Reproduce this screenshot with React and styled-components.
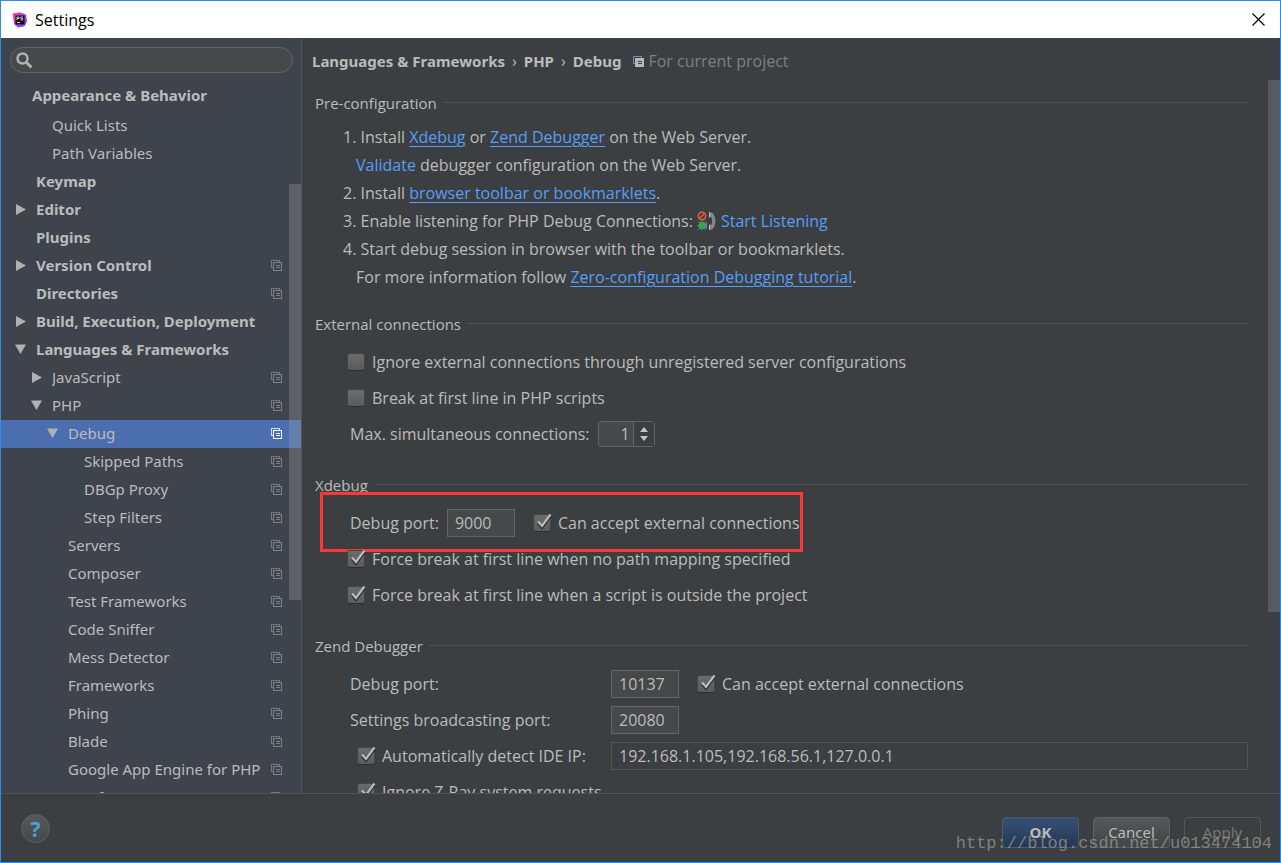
import React, { useState } from "react";
import styled, { createGlobalStyle, css } from "styled-components";

const TREE = [
  { label: "Quick Lists", depth: 1 },
  { label: "Path Variables", depth: 1 },
  { label: "Keymap", depth: 0 },
  { label: "Editor", depth: 0, arrow: "closed" },
  { label: "Plugins", depth: 0 },
  { label: "Version Control", depth: 0, arrow: "closed", project: true },
  { label: "Directories", depth: 0, project: true },
  { label: "Build, Execution, Deployment", depth: 0, arrow: "closed" },
  { label: "Languages & Frameworks", depth: 0, arrow: "open" },
  { label: "JavaScript", depth: 1, arrow: "closed", project: true },
  { label: "PHP", depth: 1, arrow: "open", project: true },
  { label: "Debug", depth: 2, arrow: "open", project: true },
  { label: "Skipped Paths", depth: 3, project: true },
  { label: "DBGp Proxy", depth: 3, project: true },
  { label: "Step Filters", depth: 3, project: true },
  { label: "Servers", depth: 2, project: true },
  { label: "Composer", depth: 2, project: true },
  { label: "Test Frameworks", depth: 2, project: true },
  { label: "Code Sniffer", depth: 2, project: true },
  { label: "Mess Detector", depth: 2, project: true },
  { label: "Frameworks", depth: 2, project: true },
  { label: "Phing", depth: 2, project: true },
  { label: "Blade", depth: 2, project: true },
  { label: "Google App Engine for PHP", depth: 2, project: true },
  { label: "Symfony", depth: 2, project: true },
];

const ProjectIcon = ({ back = "#6d7b86", front = "#7c7f83", fill = "none" }) => (
  <svg width="11" height="11" viewBox="0 0 11 11" shapeRendering="crispEdges" fill="none">
    <path d="M8.5 2V.5H.5V7.5H2" stroke={back} />
    <rect x="2.5" y="2.5" width="8" height="8" fill={fill} stroke={front} />
    <path d="M5 5.5H9M5 7.5H9" stroke={fill === "none" ? front : "#3c3f41"} />
  </svg>
);

const Arrow = ({ type }) => (
  <svg width="12" height="12" viewBox="0 0 12 12" fill="#afb1b3">
    {type === "open" && <path d="M0 1.5H11L5.5 11Z" />}
    {type === "closed" && <path d="M1 1L11 6.5L1 12Z" />}
  </svg>
);

const AppLogo = () => (
  <svg width="16" height="16" viewBox="0 0 16 16">
    <path d="M1 2L8 0.5L14 2.5L15 9L12.5 14L6 15.5L2 12Z" fill="#a043e8" />
    <path d="M0.5 1.5L8 0.5L7 4L2 9Z" fill="#f23f8f" />
    <path d="M10 12L15 9L12.5 14L6 15.5Z" fill="#7a4be0" />
    <rect x="3.5" y="3.5" width="9" height="9" fill="#120a18" />
    <path
      d="M5 8V5H7V6.5H5M11 5H8.8V6.3H10.7V8H8.5M5 10.5H8"
      stroke="#c8c8c8"
      fill="none"
    />
  </svg>
);

const ListenIcon = () => (
  <svg width="20" height="20" viewBox="0 0 20 20" fill="none">
    <path
      d="M1 10L3 12M0 14.5H3M1 19L3 17M5 9V12M5 19.5V16M9 10L7 12M9 19L7 17"
      stroke="#4f8f5d"
    />
    <ellipse cx="5" cy="14.5" rx="3.5" ry="3.8" fill="#2fa84f" />
    <path d="M10 12A3 3 0 0 0 10 17" stroke="#8d8f91" strokeWidth="1.5" />
    <circle cx="5" cy="5" r="3.7" fill="#4a3736" stroke="#e0604f" strokeWidth="1.5" />
    <path d="M2.5 7.5L7.5 2.5" stroke="#e0604f" strokeWidth="1.5" />
    <path
      d="M12 1.5H15C19.5 4.5 19.5 15.5 15 18.5H12V14H14C15.5 12 15.5 8 14 6H12Z"
      fill="#85878a"
    />
    <path d="M12.5 1V6.5M12.5 13.5V19" stroke="#b9bbbd" />
  </svg>
);

const CheckBox = ({ id, label, defaultChecked = false }) => {
  const [checked, setChecked] = useState(defaultChecked);
  return (
    <CheckLabel htmlFor={id}>
      <CheckHolder>
        <CheckInput
          id={id}
          type="checkbox"
          checked={checked}
          onChange={(e) => setChecked(e.target.checked)}
        />
        {checked && (
          <CheckMark viewBox="0 0 18 18" fill="none">
            <path d="M4 10L8 14.5L16.5 3" stroke="#222425" strokeWidth="2.5" />
            <path d="M4 8.5L8 13L16.5 1.5" stroke="#b9bbbd" strokeWidth="2.2" />
          </CheckMark>
        )}
      </CheckHolder>
      {label}
    </CheckLabel>
  );
};

const App = () => {
  const [selected, setSelected] = useState("Debug");

  return (
    <>
      <GlobalStyle />
      <Window>
        <TitleBar>
          <AppLogo />
          <Title>Settings</Title>
          <CloseButton aria-label="Close">
            <svg width="13" height="13" viewBox="0 0 13 13" stroke="#000" fill="none">
              <path d="M0.5 0.5L12.5 12.5M12.5 0.5L0.5 12.5" strokeWidth="1.2" />
            </svg>
          </CloseButton>
        </TitleBar>

        <Body>
          <Sidebar>
            <SearchBox>
              <svg width="17" height="17" viewBox="0 0 17 17" fill="none" stroke="#afb1b3">
                <circle cx="6.5" cy="6.5" r="5" strokeWidth="2.5" />
                <path d="M10 10L15.5 15.5" strokeWidth="3" />
              </svg>
              <SearchInput type="search" aria-label="Search settings" />
            </SearchBox>
            <Tree>
              <GroupHeader>Appearance &amp; Behavior</GroupHeader>
              {TREE.map((item) => {
                const active = item.label === selected;
                return (
                  <li key={item.label}>
                    <TreeRow
                      $depth={item.depth}
                      $active={active}
                      onClick={() => setSelected(item.label)}
                    >
                      <Arrow type={item.arrow} />
                      <TreeLabel>{item.label}</TreeLabel>
                      {item.project && (
                        <ProjectIcon
                          back={active ? "#cfe3f5" : undefined}
                          front={active ? "#ffffff" : undefined}
                        />
                      )}
                    </TreeRow>
                  </li>
                );
              })}
            </Tree>
            <TreeThumb />
          </Sidebar>

          <Main>
            <Breadcrumb>
              <Crumb>Languages &amp; Frameworks</Crumb>
              <Separator>›</Separator>
              <Crumb>PHP</Crumb>
              <Separator>›</Separator>
              <Crumb>Debug</Crumb>
              <ProjectIcon back="#5f96b5" front="#b4b6b8" fill="#b4b6b8" />
              <Scope>For current project</Scope>
            </Breadcrumb>

            <Scroller>
              <Section>
                <Heading>Pre-configuration</Heading>
                <Steps>
                  <Step>
                    1. Install <Link href="#xdebug">Xdebug</Link> or{" "}
                    <Link href="#zend">Zend Debugger</Link> on the Web Server.
                  </Step>
                  <Step $nested>
                    <PlainLink href="#validate">Validate</PlainLink> debugger configuration on the
                    Web Server.
                  </Step>
                  <Step>
                    2. Install <Link href="#toolbar">browser toolbar or bookmarklets</Link>.
                  </Step>
                  <Step>
                    3. Enable listening for PHP Debug Connections:
                    <ListenLink href="#listen">
                      <ListenIcon />
                      Start Listening
                    </ListenLink>
                  </Step>
                  <Step>4. Start debug session in browser with the toolbar or bookmarklets.</Step>
                  <Step $nested>
                    For more information follow{" "}
                    <Link href="#tutorial">Zero-configuration Debugging tutorial</Link>.
                  </Step>
                </Steps>
              </Section>

              <Section>
                <Heading>External connections</Heading>
                <Fields>
                  <Row>
                    <CheckBox
                      id="ignore-external"
                      label="Ignore external connections through unregistered server configurations"
                    />
                  </Row>
                  <Row>
                    <CheckBox id="break-first" label="Break at first line in PHP scripts" />
                  </Row>
                  <Row>
                    <FieldLabel htmlFor="max-connections">Max. simultaneous connections:</FieldLabel>
                    <Spinner>
                      <SpinnerInput id="max-connections" defaultValue="1" />
                      <SpinnerArrows>
                        <svg width="8" height="14" viewBox="0 0 8 14" fill="#c4c6c8">
                          <path d="M4 0L8 5H0ZM4 14L8 9H0Z" />
                        </svg>
                      </SpinnerArrows>
                    </Spinner>
                  </Row>
                </Fields>
              </Section>

              <Section>
                <Heading>Xdebug</Heading>
                <Fields>
                  <MarkedRow>
                    <FieldLabel htmlFor="xdebug-port">Debug port:</FieldLabel>
                    <PortInput id="xdebug-port" defaultValue="9000" />
                    <CheckBox
                      id="xdebug-external"
                      label="Can accept external connections"
                      defaultChecked
                    />
                    <Marker />
                  </MarkedRow>
                  <Row>
                    <CheckBox
                      id="force-mapping"
                      label="Force break at first line when no path mapping specified"
                      defaultChecked
                    />
                  </Row>
                  <Row>
                    <CheckBox
                      id="force-outside"
                      label="Force break at first line when a script is outside the project"
                      defaultChecked
                    />
                  </Row>
                </Fields>
              </Section>

              <Section>
                <Heading>Zend Debugger</Heading>
                <Fields>
                  <GridRow>
                    <FieldLabel htmlFor="zend-port">Debug port:</FieldLabel>
                    <Inline>
                      <PortInput id="zend-port" defaultValue="10137" />
                      <CheckBox
                        id="zend-external"
                        label="Can accept external connections"
                        defaultChecked
                      />
                    </Inline>
                  </GridRow>
                  <GridRow>
                    <FieldLabel htmlFor="broadcast-port">Settings broadcasting port:</FieldLabel>
                    <PortInput id="broadcast-port" defaultValue="20080" />
                  </GridRow>
                  <GridRow>
                    <Indent>
                      <CheckBox id="detect-ip" label="Automatically detect IDE IP:" defaultChecked />
                    </Indent>
                    <IpInput
                      aria-label="IDE IP"
                      readOnly
                      value="192.168.1.105,192.168.56.1,127.0.0.1"
                    />
                  </GridRow>
                  <Row>
                    <Indent>
                      <CheckBox id="ignore-zray" label="Ignore Z-Ray system requests" defaultChecked />
                    </Indent>
                  </Row>
                </Fields>
              </Section>
            </Scroller>
            <MainThumb />
          </Main>
        </Body>

        <Footer>
          <HelpButton aria-label="Help">?</HelpButton>
          <Actions>
            <Button $primary>OK</Button>
            <Button>Cancel</Button>
            <Button disabled>Apply</Button>
          </Actions>
          <Watermark>http://blog.csdn.net/u013474104</Watermark>
        </Footer>
      </Window>
    </>
  );
};

const GlobalStyle = createGlobalStyle`
  * {
    box-sizing: border-box;
  }

  body {
    margin: 0;
    background: #3c3f41;
  }

  body, button, input {
    font-family: "Open Sans", "Noto Sans", sans-serif;
    font-size: 16px;
    color: #bbbbbb;
  }

  svg {
    flex: none;
  }
`;

const compactFont = css`
  font-family: "Noto Sans", "Open Sans", sans-serif;
  font-size: 15px;
`;

const Window = styled.div`
  display: flex;
  flex-direction: column;
  height: 100vh;
  border: 1px solid #2d8cf0;
  background: #3c3f41;
`;

const TitleBar = styled.header`
  display: flex;
  flex: none;
  align-items: center;
  gap: 7px;
  height: 37px;
  padding: 0 15px 0 11px;
  background: #ffffff;
`;

const Title = styled.span`
  flex: 1;
  color: #000000;
`;

const CloseButton = styled.button`
  display: flex;
  padding: 0;
  border: none;
  background: none;
`;

const Body = styled.div`
  display: flex;
  flex: 1;
  min-height: 0;
`;

const Sidebar = styled.nav`
  position: relative;
  display: flex;
  flex: none;
  flex-direction: column;
  width: 301px;
  padding-top: 9px;
  border-right: 1px solid #515456;
  background: #3e434c;
  overflow: hidden;
`;

const SearchBox = styled.div`
  display: flex;
  flex: none;
  align-items: center;
  height: 26px;
  margin: 0 8px 0 9px;
  padding: 0 5px;
  border: 1px solid #646464;
  border-radius: 13px;
  background: #45494a;
`;

const SearchInput = styled.input`
  flex: 1;
  min-width: 0;
  border: none;
  outline: none;
  background: none;
`;

const Tree = styled.ul`
  margin: 7px 0 0;
  padding: 0;
  list-style: none;
`;

const GroupHeader = styled.li`
  ${compactFont}
  height: 32px;
  padding-left: 31px;
  font-weight: 700;
  line-height: 30px;
`;

const TreeRow = styled.button`
  ${compactFont}
  display: flex;
  align-items: center;
  gap: 9px;
  width: 100%;
  height: 28px;
  padding: 0 19px 2px ${({ $depth }) => 14 + $depth * 16}px;
  border: none;
  background: ${({ $active }) => ($active ? "#4b6eaf" : "none")};
  font-weight: ${({ $depth }) => ($depth === 0 ? 700 : 400)};
  text-align: left;
`;

const TreeLabel = styled.span`
  flex: 1;
  min-width: 0;
  margin-right: -4px;
  overflow: hidden;
  white-space: nowrap;
`;

const TreeThumb = styled.div`
  position: absolute;
  top: 146px;
  right: 0;
  width: 12px;
  height: 416px;
  background: rgba(166, 166, 166, 0.3);
`;

const Main = styled.main`
  position: relative;
  display: flex;
  flex: 1;
  flex-direction: column;
  min-width: 0;
`;

const Breadcrumb = styled.div`
  display: flex;
  flex: none;
  align-items: center;
  height: 42px;
  padding: 4px 0 0 10px;

  & > svg {
    margin: 0 4px 0 12px;
  }
`;

const Crumb = styled.b`
  ${compactFont}
`;

const Separator = styled.span`
  margin: 0 7px;
`;

const Scope = styled.span`
  color: #7d7f80;
`;

const Scroller = styled.div`
  flex: 1;
  min-height: 0;
  padding: 9px 32px 0 13px;
  overflow: hidden;
`;

const MainThumb = styled.div`
  position: absolute;
  top: 42px;
  right: 0;
  width: 12px;
  height: 532px;
  background: #595b5d;
`;

const Section = styled.section`
  margin-bottom: 19px;
`;

const Heading = styled.h2`
  display: flex;
  align-items: center;
  gap: 6px;
  height: 28px;
  margin: 0 0 6px;
  padding-bottom: 1px;
  font-size: 15px;
  font-weight: 400;

  &::after {
    content: "";
    flex: 1;
    height: 1px;
    background: #515151;
  }
`;

const Steps = styled.div`
  padding-left: 28px;
`;

const Step = styled.div`
  display: flex;
  align-items: center;
  height: 28px;
  padding-left: ${({ $nested }) => ($nested ? 13 : 0)}px;
  white-space: pre;
`;

const PlainLink = styled.a`
  color: #589df6;
  text-decoration: none;
`;

const Link = styled(PlainLink)`
  text-decoration: underline;
  text-underline-offset: 3px;
`;

const ListenLink = styled(PlainLink)`
  display: flex;
  align-items: center;
  gap: 4px;
  margin-left: 4px;
`;

const Fields = styled.div`
  padding-left: 33px;
`;

const Row = styled.div`
  display: flex;
  align-items: center;
  height: 36px;
`;

const GridRow = styled(Row)`
  display: grid;
  grid-template-columns: 263px 1fr;
`;

const MarkedRow = styled(Row)`
  position: relative;
  width: max-content;
`;

const Marker = styled.div`
  position: absolute;
  inset: -13px -3px -11px -28px;
  border: 3px solid #f93838;
  pointer-events: none;
`;

const Inline = styled.div`
  display: flex;
  align-items: center;
`;

const Indent = styled.div`
  padding-left: 10px;
`;

const FieldLabel = styled.label`
  padding: 0 8px 0 2px;
`;

const fieldStyle = css`
  height: 28px;
  padding: 0 7px;
  border: 1px solid #646464;
  outline: none;
  background: #45494a;
`;

const PortInput = styled.input`
  ${fieldStyle}
  width: 68px;
  margin-right: 19px;
`;

const IpInput = styled.input`
  ${fieldStyle}
  width: 100%;
  border-color: #515556;
  background: #3c3f41;
`;

const Spinner = styled.div`
  display: flex;
  width: 57px;
  height: 26px;
  border: 1px solid #646464;
  border-radius: 3px;
  background: #45494a;
`;

const SpinnerInput = styled.input`
  width: 35px;
  padding: 0 3px;
  border: none;
  border-right: 1px solid #646464;
  outline: none;
  background: none;
  text-align: right;
`;

const SpinnerArrows = styled.span`
  display: flex;
  flex: 1;
  align-items: center;
  justify-content: center;
  background: #3c3f41;
`;

const CheckLabel = styled.label`
  display: flex;
  align-items: center;
  gap: 8px;
  white-space: nowrap;
`;

const CheckHolder = styled.span`
  position: relative;
  display: flex;
`;

const CheckInput = styled.input`
  appearance: none;
  width: 16px;
  height: 16px;
  margin: 0;
  border-radius: 2px;
  background: linear-gradient(#6b6b6b, #5a5b5c);
  box-shadow: 0 1px 0 #2b2d2e, 0 0 0 1px #434647;
`;

const CheckMark = styled.svg`
  position: absolute;
  top: -2px;
  left: 0;
  width: 18px;
  height: 18px;
  pointer-events: none;
`;

const Footer = styled.footer`
  position: relative;
  display: flex;
  flex: none;
  align-items: center;
  justify-content: space-between;
  height: 69px;
  padding: 0 19px 0 20px;
  border-top: 1px solid #515456;
`;

const HelpButton = styled.button`
  width: 29px;
  height: 29px;
  padding: 0;
  border: 1px solid #5e6162;
  border-radius: 50%;
  background: linear-gradient(#55595a, #46494b);
  color: #4fa3cf;
  font-size: 22px;
  font-weight: 700;
  line-height: 26px;
`;

const Actions = styled.div`
  display: flex;
  gap: 14px;
  padding-top: 8px;
`;

const Button = styled.button`
  ${compactFont}
  width: 77px;
  height: 31px;
  padding: 0;
  border: 1px solid #5e6162;
  border-radius: 4px;
  background: linear-gradient(#54585a, #414547);
  ${({ $primary }) =>
    $primary &&
    css`
      border-color: #4c5a6b;
      background: linear-gradient(#365075, #263852);
      font-weight: 700;
    `}

  &:disabled {
    border-color: #55585a;
    background: none;
    color: #777777;
  }
`;

const Watermark = styled.span`
  position: absolute;
  right: 8px;
  bottom: 8px;
  color: rgba(160, 160, 150, 0.7);
  font-family: "Liberation Mono", monospace;
  font-size: 17px;
  line-height: 20px;
  pointer-events: none;
`;

export default App;
